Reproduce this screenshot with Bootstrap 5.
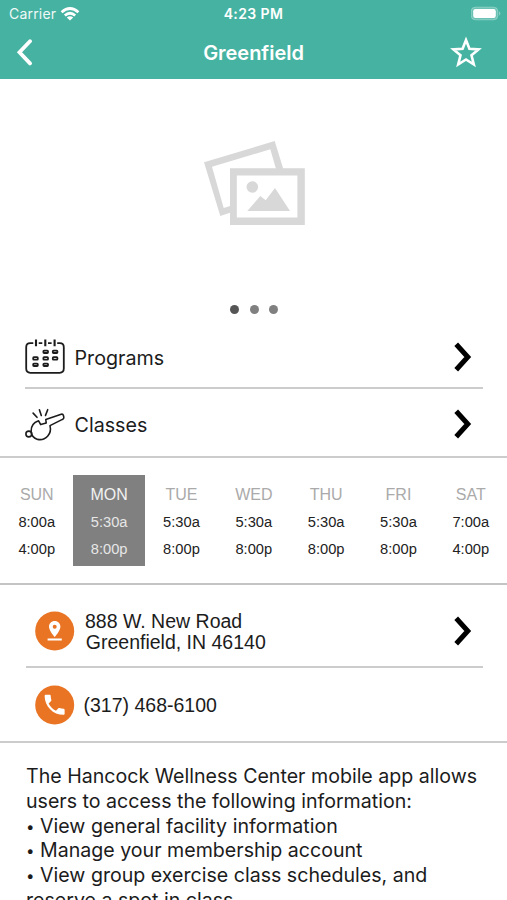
<!DOCTYPE html>
<html lang="en">
<head>
<meta charset="utf-8">
<meta name="viewport" content="width=device-width, initial-scale=1">
<title>Greenfield</title>
<link href="https://cdn.jsdelivr.net/npm/bootstrap@5.3.0/dist/css/bootstrap.min.css" rel="stylesheet">
<style>
body{font-family:Inter,"Liberation Sans",sans-serif;color:#1c1c1c;height:900px;overflow:hidden;background:#fff}
svg{display:block;flex:none}
.app-head{background:#46b3a2;height:79px;color:#fff}
.status-row{height:27px;line-height:27px}
.side{width:140px}
.carrier{font-size:14px;opacity:.92;letter-spacing:.2px;padding-left:1px}
.clock{font-weight:600;font-size:14px;letter-spacing:.4px}
.title-row{height:50px}
.title-text{font-size:20px;font-weight:600;line-height:50px;letter-spacing:-.03px;padding-top:1px}
.gallery{height:246px;padding-top:61px}
.gallery svg{margin-left:2px}
.dots{margin-top:78.5px;gap:10.4px;padding-left:1px}
.dot{width:9px;height:9px;border-radius:50%;background:#808080}
.dot.on{background:#555}
.menu-line{margin:0 24px 0 25px;padding-right:1px;height:64px;font-size:19.7px}
.menu-line.rule{border-bottom:2px solid #ccc;padding-top:1px}
.menu-line.last{height:69px}
.menu-label{padding-left:9.5px}
.menu-box{border-bottom:2px solid #ccc;height:133px}
.helv{font-family:"Liberation Sans",Arial,sans-serif}
.week{height:127px;padding:17px 0 0 .6px;border-bottom:2px solid #c4c4c4}
.day{height:91px;padding-top:9px;font-size:14.7px;line-height:27px;color:#222}
.day b{font-weight:400;font-size:16px;line-height:22px;color:#aaa;display:block;margin-bottom:3px}
.day.on{background:#808080;color:#e6e6e6}
.day.on b{color:#f2f2f2}
.contact{height:158px;border-bottom:2px solid #ccc;font-size:19.5px;line-height:21.4px}
.contact .rule{margin:0 24px 0 26px;padding:11px 1px 0 9px;height:83px;border-bottom:2px solid #ccc}
.addr{padding:2px 0 0 10px}
.addr span{padding-left:.8px}
.phone{padding-left:35px;height:73px}
.phone span{padding:2px 0 0 8.5px}
.about{padding:21px 0 0 26px;font-size:19.6px;line-height:24.8px;white-space:nowrap}
.bul{display:inline-block;width:14px;font-size:15px;line-height:1;vertical-align:1px}
</style>
</head>
<body>
<header class="app-head">
  <div class="status-row d-flex justify-content-between align-items-center">
    <div class="side d-flex align-items-center ps-2">
      <span class="carrier">Carrier</span>
      <svg class="ms-1" width="20" height="16" viewBox="0 0 20 16" fill="none" stroke="#fff" stroke-width="2.7"><path d="M1.6 6.200Q10-1.200 18.400 6.200M4.800 9.600Q10 4.900 15.200 9.600"/><path d="M10 14.600 6.800 11.500Q10 9 13.200 11.500Z" fill="#fff" stroke="none"/></svg>
    </div>
    <span class="clock">4:23 PM</span>
    <div class="side d-flex justify-content-end pe-1">
      <svg width="32" height="16" viewBox="0 0 32 16"><rect x=".2" y="1.200" width="26.600" height="12.600" rx="4" fill="#fff" fill-opacity=".2" stroke="#fff" stroke-opacity=".3" stroke-width="1"/><rect x="2.200" y="3.100" width="22.600" height="8.800" rx="2.200" fill="#fff"/><path d="M28.300 5.300q2 2.200 0 4.400z" fill="#fff" opacity=".5"/></svg>
    </div>
  </div>
  <div class="title-row d-flex justify-content-between align-items-center">
    <div class="side ps-3"><svg width="18" height="28" viewBox="0 0 18 28"><path d="M14 3.200 3.500 14.300 14 25.400" fill="none" stroke="#fff" stroke-width="3.800" stroke-linecap="round"/></svg></div>
    <span class="title-text">Greenfield</span>
    <div class="side d-flex justify-content-end pe-4"><svg width="34" height="34" viewBox="0 0 34 34"><path d="M17 5 20.400 13.700 29.600 14.400 22.500 20.300 24.800 29.500 17 24.500 9.200 29.500 11.500 20.300 4.400 14.400 13.600 13.700Z" fill="none" stroke="#fff" stroke-width="2.600"/></svg></div>
  </div>
</header>

<section class="gallery d-flex flex-column align-items-center">
  <svg width="102" height="86" viewBox="0 0 102 86" fill="#d8d8d8"><path d="M0 22.300 70.700 1 79.300 29H72L66.300 9.300 8 26.700 19.700 68 26 66V72.700L16.300 76Z"/><path fill-rule="evenodd" d="M26 28.300H100.800V85H26ZM32.800 35.500V77.500H93.400V35.500Z"/><circle cx="48.300" cy="47" r="5.800"/><path d="M43.300 71 56.300 56 61.700 60.300 71 48 86 71Z"/></svg>
  <div class="dots d-flex"><span class="dot on"></span><span class="dot"></span><span class="dot"></span></div>
</section>

<section class="menu-box">
  <div class="menu-line rule d-flex align-items-center">
    <svg width="40" height="36" viewBox="0 0 40 36" fill="none" stroke="#1c1c1c" stroke-width="1.800"><path d="M8.300 4.200H5.200Q1.200 4.200 1.200 8.200V29.600Q1.200 33.800 5.400 33.800H34.600Q38.800 33.800 38.800 29.600V8.200Q38.800 4.200 34.800 4.200H32.200M13.700 4.200H17.300M23 4.200H26.600"/><path d="M11 .5V7.300M20.300 .5V7.300M29.600 .5V7.300" stroke-width="2.100"/><g><rect x="18.400" y="11.600" width="4.600" height="2.400" rx=".7"/><rect x="27.800" y="11.600" width="4.600" height="2.400" rx=".7"/><rect x="8.200" y="18.200" width="4.600" height="2.400" rx=".7"/><rect x="18.400" y="18.200" width="4.600" height="2.400" rx=".7"/><rect x="27.800" y="18.200" width="4.600" height="2.400" rx=".7"/><rect x="8.200" y="24.600" width="4.600" height="2.400" rx=".7"/><rect x="18.400" y="24.600" width="4.600" height="2.400" rx=".7"/></g></svg>
    <span class="flex-grow-1 menu-label pt-1">Programs</span>
    <svg width="30" height="30" viewBox="0 0 30 30"><path d="M4.200 2.200 15.800 15 4.200 27.800" fill="none" stroke="#000" stroke-width="5"/></svg>
  </div>
  <div class="menu-line last d-flex align-items-center">
    <svg width="40" height="36" viewBox="0 0 40 36" fill="none" stroke="#1c1c1c" stroke-width="1.600" stroke-linejoin="round" stroke-linecap="round"><path d="M13.600 14.800 15.700 18.600 21.200 17 20.800 13.400 36.200 8.200Q38 7.800 38.500 9.600L38.800 11.300Q39 12.700 37.400 13.400L25 19.600Q26.500 25.800 22.800 30Q18.600 34.600 12.700 33.400Q6.600 31.800 6.100 25.400Q5.800 17.500 13.600 14.800Z"/><circle cx="3.800" cy="28" r="2.900"/><path d="M8.100 7.100 12 11.300M14.400 3.700 16.300 9.400M22.700 3.700 20.500 9.400"/></svg>
    <span class="flex-grow-1 menu-label pt-1">Classes</span>
    <svg width="30" height="30" viewBox="0 0 30 30"><path d="M4.200 2.200 15.800 15 4.200 27.800" fill="none" stroke="#000" stroke-width="5"/></svg>
  </div>
</section>

<section class="week helv">
  <div class="row g-0 text-center">
    <div class="col day"><b>SUN</b>8:00a<br>4:00p</div>
    <div class="col day on"><b>MON</b>5:30a<br>8:00p</div>
    <div class="col day"><b>TUE</b>5:30a<br>8:00p</div>
    <div class="col day"><b>WED</b>5:30a<br>8:00p</div>
    <div class="col day"><b>THU</b>5:30a<br>8:00p</div>
    <div class="col day"><b>FRI</b>5:30a<br>8:00p</div>
    <div class="col day"><b>SAT</b>7:00a<br>4:00p</div>
  </div>
</section>

<section class="contact helv">
  <div class="rule d-flex align-items-center">
    <svg width="40" height="40" viewBox="0 0 40 40"><circle cx="19.700" cy="20" r="19.500" fill="#e97424"/><path fill="#fff" fill-rule="evenodd" d="M19.700 10C16.300 10 14 12.500 14 15.700C14 19.700 19.700 26 19.700 26S25.400 19.700 25.400 15.700C25.400 12.500 23.100 10 19.700 10ZM19.700 13.700A2 2 0 1 1 19.700 17.700A2 2 0 1 1 19.700 13.700ZM12.600 27.600H26.800V29.600H12.600Z"/></svg>
    <div class="flex-grow-1 addr">888 W. New Road<br><span>Greenfield, IN 46140</span></div>
    <svg width="30" height="30" viewBox="0 0 30 30"><path d="M4.200 2.200 15.800 15 4.200 27.800" fill="none" stroke="#000" stroke-width="5"/></svg>
  </div>
  <div class="phone d-flex align-items-center">
    <svg width="40" height="40" viewBox="0 0 40 40"><circle cx="19.700" cy="20" r="19.500" fill="#e97424"/><path transform="translate(6.300 6.500) scale(1.110)" fill="#fff" d="M6.620 10.790C8.060 13.620 10.380 15.930 13.210 17.380L15.410 15.180C15.680 14.910 16.080 14.820 16.430 14.940C17.550 15.310 18.760 15.510 20 15.510C20.550 15.510 21 15.960 21 16.510V20C21 20.550 20.550 21 20 21C10.610 21 3 13.390 3 4C3 3.450 3.450 3 4 3H7.500C8.050 3 8.500 3.450 8.500 4C8.500 5.250 8.700 6.450 9.070 7.570C9.180 7.920 9.100 8.310 8.820 8.590Z"/></svg>
    <span>(317) 468-6100</span>
  </div>
</section>

<section class="about">
  The Hancock Wellness Center mobile app allows<br>users to access the following information:<br><span class="bul">•</span>View general facility information<br><span class="bul">•</span>Manage your membership account<br><span class="bul">•</span>View group exercise class schedules, and<br>reserve a spot in class.
</section>
<script src="https://cdn.jsdelivr.net/npm/bootstrap@5.3.0/dist/js/bootstrap.bundle.min.js"></script>
</body>
</html>
